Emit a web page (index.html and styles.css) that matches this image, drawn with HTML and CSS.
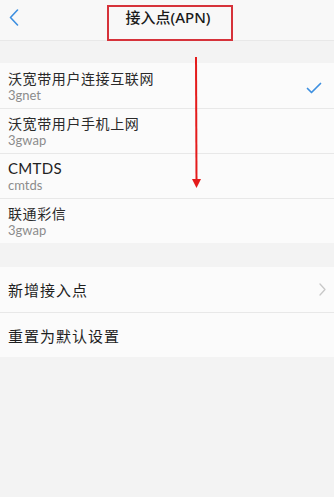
FILE: index.html
```html
<!DOCTYPE html>
<html>
<head>
  <meta charset="utf-8">
  <title>接入点(APN)</title>
  <link rel="stylesheet" href="styles.css">
</head>
<body>
  <div class="screen">
    <div class="header">
      <span class="back">
        <svg width="10" height="17" viewBox="0 0 10 17" fill="none">
          <path d="M8.5 1 L1.5 8.5 L8.5 16" stroke="#3d8fe0" stroke-width="1.6" stroke-linecap="round" stroke-linejoin="round"/>
        </svg>
      </span>
      <h1 class="title">接入点(APN)</h1>
    </div>

    <div class="group">
      <div class="row apn">
        <div class="text">
          <div class="name">沃宽带用户连接互联网</div>
          <div class="sub">3gnet</div>
        </div>
        <svg class="check" width="16" height="12" viewBox="0 0 16 12" fill="none">
          <path d="M1.5 6.5 L5.5 10.5 L14.5 1.5" stroke="#3d8fe0" stroke-width="1.7" stroke-linecap="round" stroke-linejoin="round"/>
        </svg>
      </div>
      <div class="row apn">
        <div class="text">
          <div class="name">沃宽带用户手机上网</div>
          <div class="sub">3gwap</div>
        </div>
      </div>
      <div class="row apn">
        <div class="text">
          <div class="name latin">CMTDS</div>
          <div class="sub">cmtds</div>
        </div>
      </div>
      <div class="row apn">
        <div class="text">
          <div class="name">联通彩信</div>
          <div class="sub">3gwap</div>
        </div>
      </div>
    </div>

    <div class="group">
      <div class="row action">
        <span class="label">新增接入点</span>
        <svg class="chevron" width="7" height="13" viewBox="0 0 7 13" fill="none">
          <path d="M1 1 L6 6.5 L1 12" stroke="#c8c8c8" stroke-width="1.3" stroke-linecap="round" stroke-linejoin="round"/>
        </svg>
      </div>
      <div class="row action">
        <span class="label">重置为默认设置</span>
      </div>
    </div>

    <!-- annotations -->
    <div class="mark-box"></div>
    <svg class="mark-arrow" width="12" height="134" viewBox="0 0 12 134">
      <line x1="6" y1="0" x2="6.5" y2="124" stroke="#e41b1b" stroke-width="2"/>
      <path d="M2 122 L11 122 L6.5 131 Z" fill="#e41b1b"/>
    </svg>
  </div>
</body>
</html>
```

FILE: styles.css
```css
body {
  margin: 0;
  background-color: #f3f3f3;
  font-family: "Noto Sans", "Noto Sans CJK SC", sans-serif;
}

.screen {
  position: relative;
  width: 334px;
  height: 497px;
  overflow: hidden;
  background-color: #f3f3f3;
}

.header {
  height: 40px;
  border-bottom: 1px solid #e8e8e8;
  background-color: #f8f8f8;
  display: flex;
  align-items: center;
  justify-content: center;
  position: relative;
}

.back {
  position: absolute;
  left: 9px;
  top: 9px;
}

.title {
  margin: 0;
  font-size: 15px;
  font-weight: 500;
  color: #1a1a1a;
  margin-left: 2px;
  margin-top: -7px;
}

.group {
  margin-top: 22px;
  background-color: #fbfbfb;
}

.group + .group {
  margin-top: 24px;
}

.row {
  display: flex;
  align-items: center;
  height: 45px;
  padding: 0 12px 0 8px;
  border-top: 1px solid #e8e8e8;
  box-sizing: border-box;
}

.row:first-child {
  border-top: none;
}

.text {
  flex: 1;
  display: flex;
  flex-direction: column;
  margin-top: 1px;
}

.name {
  font-family: "Noto Sans CJK SC", sans-serif;
  font-size: 14px;
  line-height: 17px;
  letter-spacing: 0.6px;
  color: #2a2a2a;
}

.name.latin {
  font-family: "Lato", "Noto Sans", sans-serif;
  font-size: 15px;
  letter-spacing: 0.3px;
  color: #222;
}

.sub {
  font-family: "Lato", "Noto Sans", sans-serif;
  font-size: 13px;
  line-height: 16px;
  color: #8c8c8c;
}

.check {
  margin-top: 4px;
}

.action {
  justify-content: space-between;
}

.label {
  font-family: "Noto Sans CJK SC", sans-serif;
  font-size: 15px;
  letter-spacing: 1px;
  color: #1e1e1e;
}

.chevron {
  margin-right: -4px;
}

.mark-box {
  position: absolute;
  left: 107px;
  top: 5px;
  width: 122px;
  height: 32px;
  border: 2px solid #d6323a;
}

.mark-arrow {
  position: absolute;
  left: 190px;
  top: 57px;
}
```
